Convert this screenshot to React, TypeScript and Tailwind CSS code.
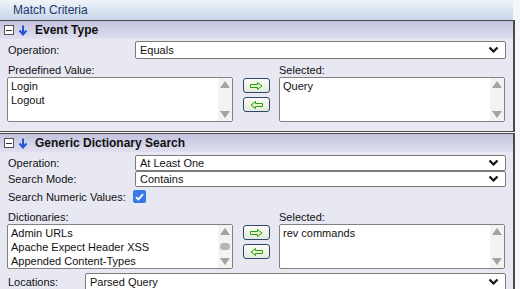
import React from 'react'

const Chevron: React.FC = () => (
  <svg width="11" height="8" viewBox="0 0 11 8" className="shrink-0">
    <path d="M1.5 1.5 L5.5 5.5 L9.5 1.5" fill="none" stroke="#111" strokeWidth="2.2" />
  </svg>
)

const Select: React.FC<{ value: string; className?: string; h?: string }> = ({ value, className = '', h = 'h-[18px]' }) => (
  <div
    className={`flex items-center justify-between bg-white border border-[#7a7a7a] rounded-[2px] pl-[4px] pr-[6px] ${h} ${className}`}
  >
    <span className="leading-none">{value}</span>
    <Chevron />
  </div>
)

const ScrollArrows: React.FC<{ thumb?: boolean }> = ({ thumb }) => (
  <div className="flex flex-col items-center justify-between w-[14px] py-[3px] bg-[#f3f3f3]">
    <svg width="10" height="7" viewBox="0 0 10 7">
      <path d="M5 0 L10 7 L0 7 Z" fill="#a3a3a3" />
    </svg>
    {thumb && <div className="w-[10px] h-[7px] rounded-full bg-[#b5b5b5]" />}
    <svg width="10" height="7" viewBox="0 0 10 7">
      <path d="M0 0 L10 0 L5 7 Z" fill="#a3a3a3" />
    </svg>
  </div>
)

const ListBox: React.FC<{ items: string[]; thumb?: boolean }> = ({ items, thumb }) => (
  <div className="flex bg-white border border-[#828282] rounded-[2px] h-[45px]">
    <div className="flex-1 pl-[3px] pt-[1px] leading-[14px] whitespace-nowrap overflow-hidden">
      {items.map((it) => (
        <div key={it}>{it}</div>
      ))}
    </div>
    <ScrollArrows thumb={thumb} />
  </div>
)

const MoveButton: React.FC<{ dir: 'right' | 'left' }> = ({ dir }) => (
  <div className="w-[27px] h-[15px] rounded-[3px] border border-[#2f4670] bg-gradient-to-b from-[#fbfcf6] to-[#e4ebd9] flex items-center justify-center">
    <svg width="13" height="8" viewBox="0 0 13 8" className={dir === 'left' ? 'scale-x-[-1]' : ''}>
      <path d="M0.5 2.5 H7.5 V0.5 L12 4 L7.5 7.5 V5.5 H0.5 Z" fill="#e6f5c8" stroke="#2e9a16" strokeWidth="1" />
    </svg>
  </div>
)

const DualList: React.FC<{ label: string; left: string[]; right: string[]; thumb?: boolean }> = ({ label, left, right, thumb }) => (
  <div className="flex pl-[7px]">
    <div className="flex flex-col w-[226px]">
      <div className="h-[14px] pl-px">{label}</div>
      <ListBox items={left} thumb={thumb} />
    </div>
    <div className="flex flex-col gap-[4px] pt-[15px] pl-[10px] pr-[9px]">
      <MoveButton dir="right" />
      <MoveButton dir="left" />
    </div>
    <div className="flex flex-col w-[226px]">
      <div className="h-[14px]">Selected:</div>
      <ListBox items={right} />
    </div>
  </div>
)

const SectionHeader: React.FC<{ title: string }> = ({ title }) => (
  <div className="flex items-center h-[18px] bg-gradient-to-b from-[#c3c3df] to-[#e0e0ef] pl-[4px]">
    <div className="w-[10px] h-[10px] border border-[#555] bg-white flex items-center justify-center">
      <div className="w-[6px] h-px bg-[#333]" />
    </div>
    <svg width="10" height="11" viewBox="0 0 10 11" className="ml-[4px]">
      <path d="M5 0.5 V9 M1.5 5.5 L5 9.5 L8.5 5.5" fill="none" stroke="#2455d6" strokeWidth="2" />
    </svg>
    <span className="ml-[7px] font-bold text-[12px] text-[#111]">{title}</span>
  </div>
)

const Row: React.FC<{ label: string; children: React.ReactNode; labelW?: string }> = ({ label, children, labelW = 'w-[128px]' }) => (
  <div className="flex items-center pl-[8px]">
    <div className={`${labelW} shrink-0 whitespace-nowrap`}>{label}</div>
    {children}
  </div>
)

export default function App() {
  return (
    <div className="w-[520px] h-[289px] overflow-hidden bg-[#f4f6f8] text-[11px] leading-[14px] text-[#111] font-['Liberation_Sans',Arial,sans-serif]">
      <div className="w-[513px] h-[20px] flex items-center pl-[13px] bg-gradient-to-b from-[#f0f4f9] to-[#c6d6e7] text-[#24356c] text-[12px]">
        Match Criteria
      </div>

      <div className="w-[515px] border-t border-r-2 border-b border-[#4a4a4a] bg-[#e8e8f3]">
        <SectionHeader title="Event Type" />
        <div className="flex flex-col pt-[2px] pb-[9px]">
          <Row label="Operation:">
            <Select value="Equals" className="w-[371px] ml-[-1px]" />
          </Row>
          <div className="mt-[4px]">
            <DualList label="Predefined Value:" left={['Login', 'Logout']} right={['Query']} />
          </div>
        </div>
      </div>

      <div className="w-[515px] mt-px border-t border-r-2 border-[#4a4a4a] bg-[#e8e8f3]">
        <SectionHeader title="Generic Dictionary Search" />
        <div className="flex flex-col pt-[3px]">
          <Row label="Operation:">
            <Select value="At Least One" className="w-[371px] ml-[-1px]" h="h-[16px]" />
          </Row>
          <Row label="Search Mode:">
            <Select value="Contains" className="w-[371px] ml-[-1px]" h="h-[16px]" />
          </Row>
          <div className="flex items-center pl-[8px] h-[17px] mt-px">
            <div className="w-[125px] shrink-0 whitespace-nowrap">Search Numeric Values:</div>
            <div className="w-[13px] h-[13px] rounded-[2px] bg-[#3b78e7] flex items-center justify-center">
              <svg width="9" height="8" viewBox="0 0 9 8">
                <path d="M1 4.2 L3.4 6.5 L8 1.2" fill="none" stroke="#fff" strokeWidth="1.8" />
              </svg>
            </div>
          </div>
          <div className="mt-[5px]">
            <DualList
              label="Dictionaries:"
              left={['Admin URLs', 'Apache Expect Header XSS', 'Appended Content-Types']}
              right={['rev commands']}
              thumb
            />
          </div>
          <div className="mt-[4px]">
            <Row label="Locations:" labelW="w-[77px]">
              <Select value="Parsed Query" className="w-[421px]" />
            </Row>
          </div>
        </div>
      </div>
    </div>
  )
}
